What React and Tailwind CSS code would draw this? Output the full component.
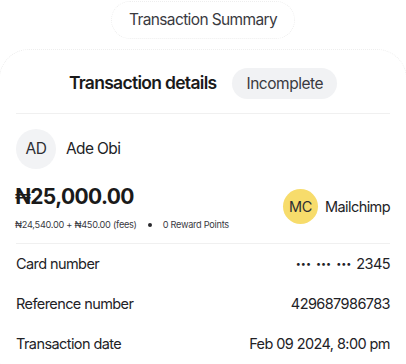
export default function App() {
  return (
    <div
      className="w-[406px] h-[364px] overflow-hidden bg-white relative"
      style={{ fontFamily: "Inter, 'Noto Sans', sans-serif" }}
    >
      <div className="flex justify-center pt-[1px]">
        <div className="h-[38px] px-[17px] flex items-center rounded-full border border-dotted border-[#eeeeee] text-[15.5px] tracking-[-0.04em] text-[#3a3a3f]">
          Transaction Summary
        </div>
      </div>
      <div className="mt-[10px] mx-[-1px] rounded-[30px] border border-dotted border-[#eeeeee] px-[16px] h-[340px]">
        <div className="flex items-center justify-center gap-[16px] pt-[18px] pb-[14px] border-b border-[#f0f0f0]">
          <span className="text-[17.5px] font-semibold tracking-[-0.04em] text-[#1a1a1a]">
            Transaction details
          </span>
          <span className="h-[31px] px-[14px] flex items-center rounded-full bg-[#f1f2f4] text-[15.5px] tracking-[-0.03em] text-[#3a3a3f]">
            Incomplete
          </span>
        </div>
        <div className="flex items-center gap-[10px] pt-[15px]">
          <div className="w-[40px] h-[40px] rounded-full bg-[#f2f3f5] flex items-center justify-center text-[15.5px] tracking-[-0.03em] text-[#2e2e33]">
            AD
          </div>
          <span className="text-[15.5px] tracking-[-0.04em] text-[#222226]">Ade Obi</span>
        </div>
        <div className="flex items-center justify-between pt-[14px] pb-[11px] border-b border-[#f0f0f0]">
          <div className="flex flex-col -ml-[1px]">
            <span className="text-[21px] font-bold tracking-[-0.03em] text-[#1a1a1a] leading-[28px]">
              ₦25,000.00
            </span>
            <div className="flex items-center gap-[8px] mt-[7px] text-[9.2px] tracking-[-0.03em] text-[#3a3a3f]">
              <span>₦24,540.00 + ₦450.00 (fees)</span>
              <span className="w-[4px] h-[4px] rounded-full bg-[#2a2a2e] mx-[3px]"></span>
              <span>0 Reward Points</span>
            </div>
          </div>
          <div className="flex items-center gap-[7px] -mt-[2px]">
            <div className="w-[35px] h-[35px] rounded-full bg-[#f7dc6b] flex items-center justify-center text-[14.5px] tracking-[-0.03em] text-[#2e2e33]">
              MC
            </div>
            <span className="text-[14.5px] tracking-[-0.04em] text-[#222226]">Mailchimp</span>
          </div>
        </div>
        <div className="flex flex-col text-[14.5px] tracking-[-0.04em] text-[#222226]">
          <div className="flex justify-between items-center h-[40px]">
            <span>Card number</span>
            <span className="flex items-center gap-[5px]">
              <span className="text-[9px] tracking-[0]">•••</span>
              <span className="text-[9px] tracking-[0]">•••</span>
              <span className="text-[9px] tracking-[0]">•••</span>
              <span>2345</span>
            </span>
          </div>
          <div className="flex justify-between items-center h-[40px]">
            <span>Reference number</span>
            <span>429687986783</span>
          </div>
          <div className="flex justify-between items-center h-[40px]">
            <span>Transaction date</span>
            <span>Feb 09 2024, 8:00 pm</span>
          </div>
        </div>
      </div>
    </div>
  );
}
